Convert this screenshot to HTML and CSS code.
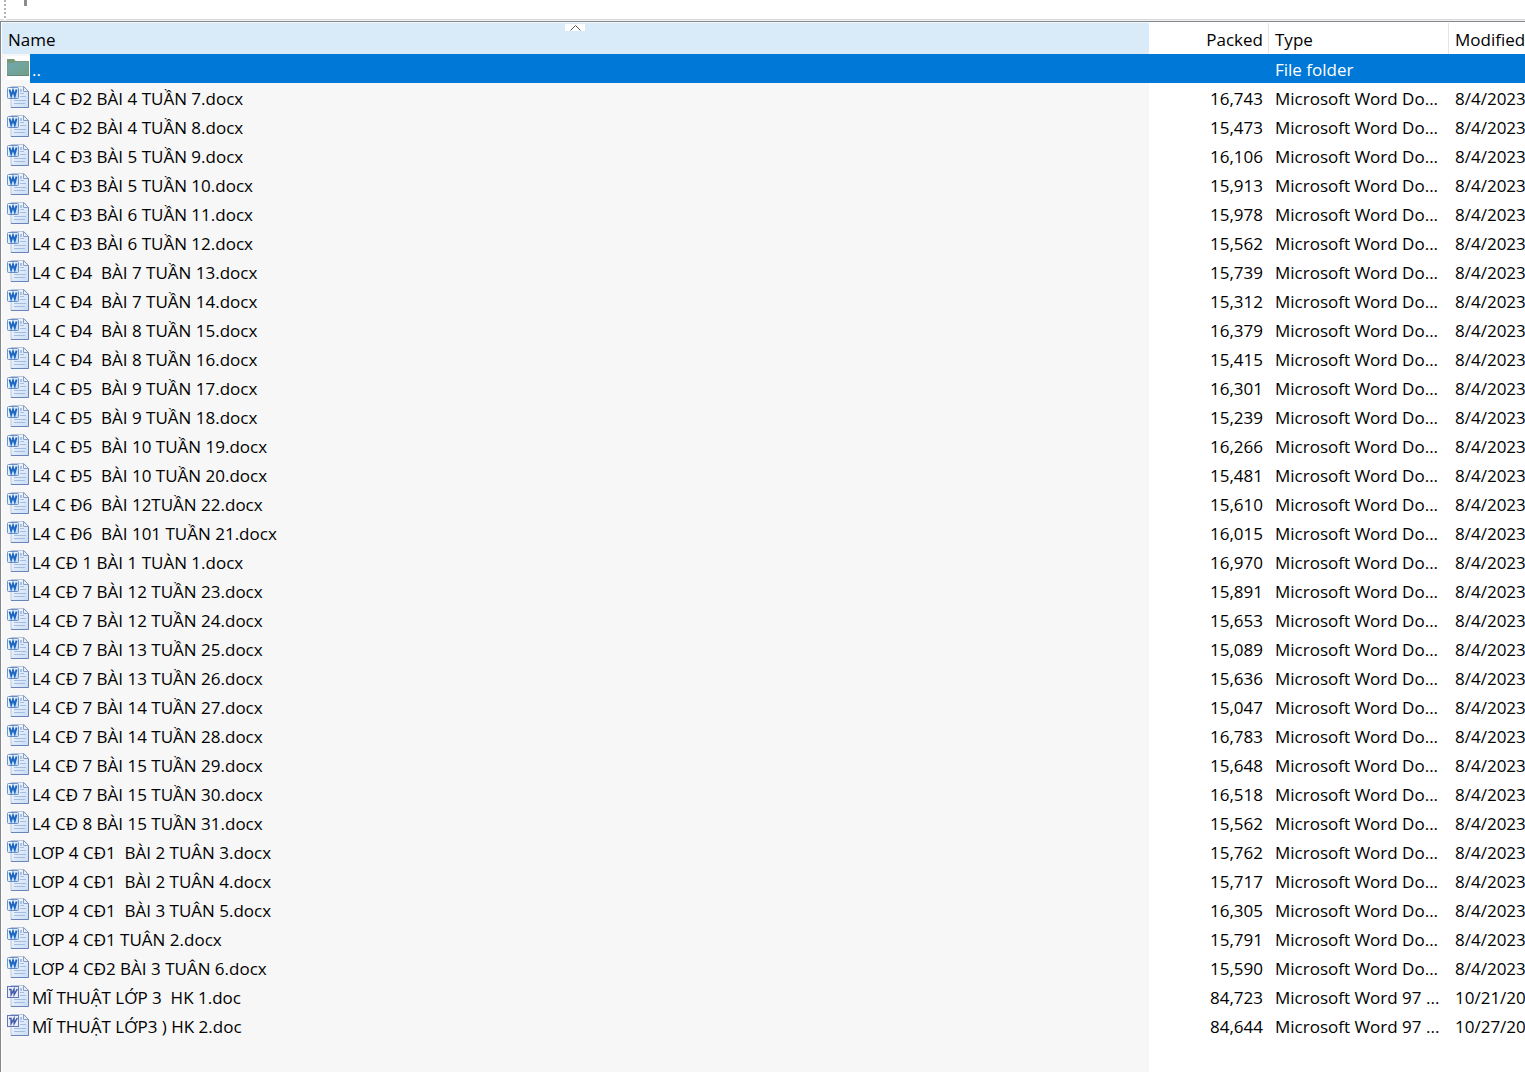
FILE: index.html
```html
<!DOCTYPE html>
<html lang="vi">
<head>
<meta charset="utf-8">
<meta name="viewport" content="width=device-width, initial-scale=1">
<title>Archive contents</title>
<link rel="stylesheet" href="styles.css">
</head>
<body>
<svg class="defs" aria-hidden="true">
  <defs>
    <linearGradient id="page-fill" x1="0" y1="0" x2="1" y2="1"><stop offset="0" stop-color="#fafcff"/><stop offset="1" stop-color="#c9dcf4"/></linearGradient>
    <linearGradient id="badge-fill" x1="0" y1="0" x2="1" y2="1"><stop offset="0" stop-color="#ffffff"/><stop offset="1" stop-color="#b9d8f5"/></linearGradient>
    <linearGradient id="folder-fill" x1="0" y1="0" x2="1" y2="1"><stop offset="0" stop-color="#6fa9b0"/><stop offset="1" stop-color="#739f86"/></linearGradient>
  </defs>
  <symbol id="sheet" viewBox="0 0 24 24">
    <path d="M5 1.500H18L22.500 6.500V22.500H5Z" fill="url(#page-fill)" stroke="#b9c6dc"/>
    <path d="M22.500 6V22.500H5" fill="none" stroke="#6884b8"/>
    <path d="M17.500 1.500V6.500H22.500Z" fill="#e6effa" stroke="#8a9fc2"/>
    <path d="M14 8.500H18M14 11.500H20M8 15.500H20M8 18.500H19" stroke="#a3bde0" fill="none"/>
    <path d="M14 4H16V7H14Z" fill="#a9c0de"/>
  </symbol>
  <symbol id="docx" viewBox="0 0 24 24">
    <use href="#sheet"/>
    <rect x="1.500" y="2.500" width="11" height="11" rx="1" fill="url(#badge-fill)" stroke="#6f92c6"/>
    <path d="M3.500 4.500L5.200 10.800L7 5.500L8.800 10.800L10.500 4.500" fill="none" stroke="#1d66c2" stroke-width="1.900"/>
  </symbol>
  <symbol id="doc" viewBox="0 0 24 24">
    <use href="#sheet"/>
    <rect x="1.500" y="2.500" width="11" height="11" fill="#e8edfa" stroke="#6276b8"/>
    <path d="M3 5.500H5L5.200 10.500L8 5.500L8.200 10.500L11.300 5" fill="none" stroke="#4059a8" stroke-width="1.500"/>
  </symbol>
  <symbol id="folder" viewBox="0 0 24 24">
    <path d="M0 0H24V24H0Z" fill="#fff"/>
    <path d="M1 3H8L9.500 5H23V20H1Z" fill="#769a77"/>
    <path d="M1.500 7H8L9.500 6H22.500V19.500H1.500Z" fill="url(#folder-fill)"/>
    <path d="M1 19.500H23" stroke="#648874"/>
  </symbol>
</svg>
<header class="toolbar"><span class="grip"></span><span class="up-stem"></span></header>
<main class="list">
<table class="files">
<colgroup><col><col class="col-packed"><col class="col-type"><col class="col-modified"></colgroup>
<thead>
<tr><th class="sorted" aria-sort="ascending">Name<svg class="sort" viewBox="0 0 20 7" aria-hidden="true"><path d="M5.500 6.500L10.500 1.500L15.500 6.500" fill="none" stroke="#555"/></svg></th><th class="num">Packed</th><th>Type</th><th>Modified</th></tr>
</thead>
<tbody>
<tr class="selected"><td class="name"><svg class="icon"><use href="#folder"/></svg><span>..</span></td><td class="num"></td><td>File folder</td><td></td></tr>
<tr><td class="name"><svg class="icon"><use href="#docx"/></svg><span>L4 C Đ2 BÀI 4 TUẦN 7.docx</span></td><td class="num">16,743</td><td>Microsoft Word Do...</td><td>8/4/2023</td></tr>
<tr><td class="name"><svg class="icon"><use href="#docx"/></svg><span>L4 C Đ2 BÀI 4 TUẦN 8.docx</span></td><td class="num">15,473</td><td>Microsoft Word Do...</td><td>8/4/2023</td></tr>
<tr><td class="name"><svg class="icon"><use href="#docx"/></svg><span>L4 C Đ3 BÀI 5 TUẦN 9.docx</span></td><td class="num">16,106</td><td>Microsoft Word Do...</td><td>8/4/2023</td></tr>
<tr><td class="name"><svg class="icon"><use href="#docx"/></svg><span>L4 C Đ3 BÀI 5 TUẦN 10.docx</span></td><td class="num">15,913</td><td>Microsoft Word Do...</td><td>8/4/2023</td></tr>
<tr><td class="name"><svg class="icon"><use href="#docx"/></svg><span>L4 C Đ3 BÀI 6 TUẦN 11.docx</span></td><td class="num">15,978</td><td>Microsoft Word Do...</td><td>8/4/2023</td></tr>
<tr><td class="name"><svg class="icon"><use href="#docx"/></svg><span>L4 C Đ3 BÀI 6 TUẦN 12.docx</span></td><td class="num">15,562</td><td>Microsoft Word Do...</td><td>8/4/2023</td></tr>
<tr><td class="name"><svg class="icon"><use href="#docx"/></svg><span>L4 C Đ4  BÀI 7 TUẦN 13.docx</span></td><td class="num">15,739</td><td>Microsoft Word Do...</td><td>8/4/2023</td></tr>
<tr><td class="name"><svg class="icon"><use href="#docx"/></svg><span>L4 C Đ4  BÀI 7 TUẦN 14.docx</span></td><td class="num">15,312</td><td>Microsoft Word Do...</td><td>8/4/2023</td></tr>
<tr><td class="name"><svg class="icon"><use href="#docx"/></svg><span>L4 C Đ4  BÀI 8 TUẦN 15.docx</span></td><td class="num">16,379</td><td>Microsoft Word Do...</td><td>8/4/2023</td></tr>
<tr><td class="name"><svg class="icon"><use href="#docx"/></svg><span>L4 C Đ4  BÀI 8 TUẦN 16.docx</span></td><td class="num">15,415</td><td>Microsoft Word Do...</td><td>8/4/2023</td></tr>
<tr><td class="name"><svg class="icon"><use href="#docx"/></svg><span>L4 C Đ5  BÀI 9 TUẦN 17.docx</span></td><td class="num">16,301</td><td>Microsoft Word Do...</td><td>8/4/2023</td></tr>
<tr><td class="name"><svg class="icon"><use href="#docx"/></svg><span>L4 C Đ5  BÀI 9 TUẦN 18.docx</span></td><td class="num">15,239</td><td>Microsoft Word Do...</td><td>8/4/2023</td></tr>
<tr><td class="name"><svg class="icon"><use href="#docx"/></svg><span>L4 C Đ5  BÀI 10 TUẦN 19.docx</span></td><td class="num">16,266</td><td>Microsoft Word Do...</td><td>8/4/2023</td></tr>
<tr><td class="name"><svg class="icon"><use href="#docx"/></svg><span>L4 C Đ5  BÀI 10 TUẦN 20.docx</span></td><td class="num">15,481</td><td>Microsoft Word Do...</td><td>8/4/2023</td></tr>
<tr><td class="name"><svg class="icon"><use href="#docx"/></svg><span>L4 C Đ6  BÀI 12TUẦN 22.docx</span></td><td class="num">15,610</td><td>Microsoft Word Do...</td><td>8/4/2023</td></tr>
<tr><td class="name"><svg class="icon"><use href="#docx"/></svg><span>L4 C Đ6  BÀI 101 TUẦN 21.docx</span></td><td class="num">16,015</td><td>Microsoft Word Do...</td><td>8/4/2023</td></tr>
<tr><td class="name"><svg class="icon"><use href="#docx"/></svg><span>L4 CĐ 1 BÀI 1 TUÀN 1.docx</span></td><td class="num">16,970</td><td>Microsoft Word Do...</td><td>8/4/2023</td></tr>
<tr><td class="name"><svg class="icon"><use href="#docx"/></svg><span>L4 CĐ 7 BÀI 12 TUẦN 23.docx</span></td><td class="num">15,891</td><td>Microsoft Word Do...</td><td>8/4/2023</td></tr>
<tr><td class="name"><svg class="icon"><use href="#docx"/></svg><span>L4 CĐ 7 BÀI 12 TUẦN 24.docx</span></td><td class="num">15,653</td><td>Microsoft Word Do...</td><td>8/4/2023</td></tr>
<tr><td class="name"><svg class="icon"><use href="#docx"/></svg><span>L4 CĐ 7 BÀI 13 TUẦN 25.docx</span></td><td class="num">15,089</td><td>Microsoft Word Do...</td><td>8/4/2023</td></tr>
<tr><td class="name"><svg class="icon"><use href="#docx"/></svg><span>L4 CĐ 7 BÀI 13 TUẦN 26.docx</span></td><td class="num">15,636</td><td>Microsoft Word Do...</td><td>8/4/2023</td></tr>
<tr><td class="name"><svg class="icon"><use href="#docx"/></svg><span>L4 CĐ 7 BÀI 14 TUẦN 27.docx</span></td><td class="num">15,047</td><td>Microsoft Word Do...</td><td>8/4/2023</td></tr>
<tr><td class="name"><svg class="icon"><use href="#docx"/></svg><span>L4 CĐ 7 BÀI 14 TUẦN 28.docx</span></td><td class="num">16,783</td><td>Microsoft Word Do...</td><td>8/4/2023</td></tr>
<tr><td class="name"><svg class="icon"><use href="#docx"/></svg><span>L4 CĐ 7 BÀI 15 TUẦN 29.docx</span></td><td class="num">15,648</td><td>Microsoft Word Do...</td><td>8/4/2023</td></tr>
<tr><td class="name"><svg class="icon"><use href="#docx"/></svg><span>L4 CĐ 7 BÀI 15 TUẦN 30.docx</span></td><td class="num">16,518</td><td>Microsoft Word Do...</td><td>8/4/2023</td></tr>
<tr><td class="name"><svg class="icon"><use href="#docx"/></svg><span>L4 CĐ 8 BÀI 15 TUẦN 31.docx</span></td><td class="num">15,562</td><td>Microsoft Word Do...</td><td>8/4/2023</td></tr>
<tr><td class="name"><svg class="icon"><use href="#docx"/></svg><span>LƠP 4 CĐ1  BÀI 2 TUÂN 3.docx</span></td><td class="num">15,762</td><td>Microsoft Word Do...</td><td>8/4/2023</td></tr>
<tr><td class="name"><svg class="icon"><use href="#docx"/></svg><span>LƠP 4 CĐ1  BÀI 2 TUÂN 4.docx</span></td><td class="num">15,717</td><td>Microsoft Word Do...</td><td>8/4/2023</td></tr>
<tr><td class="name"><svg class="icon"><use href="#docx"/></svg><span>LƠP 4 CĐ1  BÀI 3 TUÂN 5.docx</span></td><td class="num">16,305</td><td>Microsoft Word Do...</td><td>8/4/2023</td></tr>
<tr><td class="name"><svg class="icon"><use href="#docx"/></svg><span>LƠP 4 CĐ1 TUÂN 2.docx</span></td><td class="num">15,791</td><td>Microsoft Word Do...</td><td>8/4/2023</td></tr>
<tr><td class="name"><svg class="icon"><use href="#docx"/></svg><span>LƠP 4 CĐ2 BÀI 3 TUÂN 6.docx</span></td><td class="num">15,590</td><td>Microsoft Word Do...</td><td>8/4/2023</td></tr>
<tr><td class="name"><svg class="icon"><use href="#doc"/></svg><span>MĨ THUẬT LỚP 3  HK 1.doc</span></td><td class="num">84,723</td><td>Microsoft Word 97 ...</td><td>10/21/20</td></tr>
<tr><td class="name"><svg class="icon"><use href="#doc"/></svg><span>MĨ THUẬT LỚP3 ) HK 2.doc</span></td><td class="num">84,644</td><td>Microsoft Word 97 ...</td><td>10/27/20</td></tr>
</tbody>
</table>
</main>
</body>
</html>
```
FILE: styles.css
```css
* { box-sizing: border-box; }

body {
  margin: 0;
  min-height: 100vh;
  display: flex;
  flex-direction: column;
  background: #fff;
  color: #000;
  font: 17px/26px "Open Sans", "Noto Sans", sans-serif;
}

.defs { position: absolute; width: 0; height: 0; }

.toolbar {
  display: flex;
  gap: 18px;
  height: 21px;
  padding-left: 4px;
  border-bottom: 1px solid #f0f0f0;
  box-shadow: inset 0 -1px #d9d9d9;
}
.grip {
  width: 2px;
  background: repeating-linear-gradient(#b4b4b4 0 2px, #fff 2px 4px);
}
.up-stem { width: 3px; height: 6px; background: #8c8c8c; }

/* The sorted column keeps its tint below the last row. */
.list {
  flex: 1;
  padding: 1px 0 0 1px;
  border-top: 1px solid #828790;
  border-left: 1px solid #828790;
  background: linear-gradient(#f7f7f7, #f7f7f7) 1px 0 / calc(100% - 377px) 100% no-repeat #fff;
}

.files {
  width: 100%;
  table-layout: fixed;
  border-collapse: separate;
  border-spacing: 0;
}
.col-packed { width: 120px; }
.col-type { width: 180px; }
.col-modified { width: 76px; }

th, td {
  height: 29px;
  padding: 3px 0 0 6px;
  overflow: hidden;
  white-space: pre;
  text-align: left;
  vertical-align: top;
  font-weight: 400;
}
th {
  position: relative;
  height: 31px;
  padding-top: 4px;
  background: #fff;
}
th + th { border-right: 1px solid #e5e5e5; }
th:last-child { border-right: 0; }
.num { padding-right: 6px; text-align: right; }
th.num { padding-right: 5px; }
.sorted { background: #d9ebf9; }
.sort {
  position: absolute;
  top: 1px;
  left: calc(50% - 11px);
  width: 20px;
  height: 7px;
  background: #fff;
}

.name { padding: 0; }
.icon {
  float: left;
  width: 24px;
  height: 24px;
  margin: 2px 0 0 4px;
}
.name span {
  display: block;
  height: 29px;
  margin-left: 28px;
  padding: 3px 0 0 2px;
}
.selected td { background: #0078d7; color: #fff; }
.selected .name { background: none; }
.selected .name span { background: #0078d7; }
```
